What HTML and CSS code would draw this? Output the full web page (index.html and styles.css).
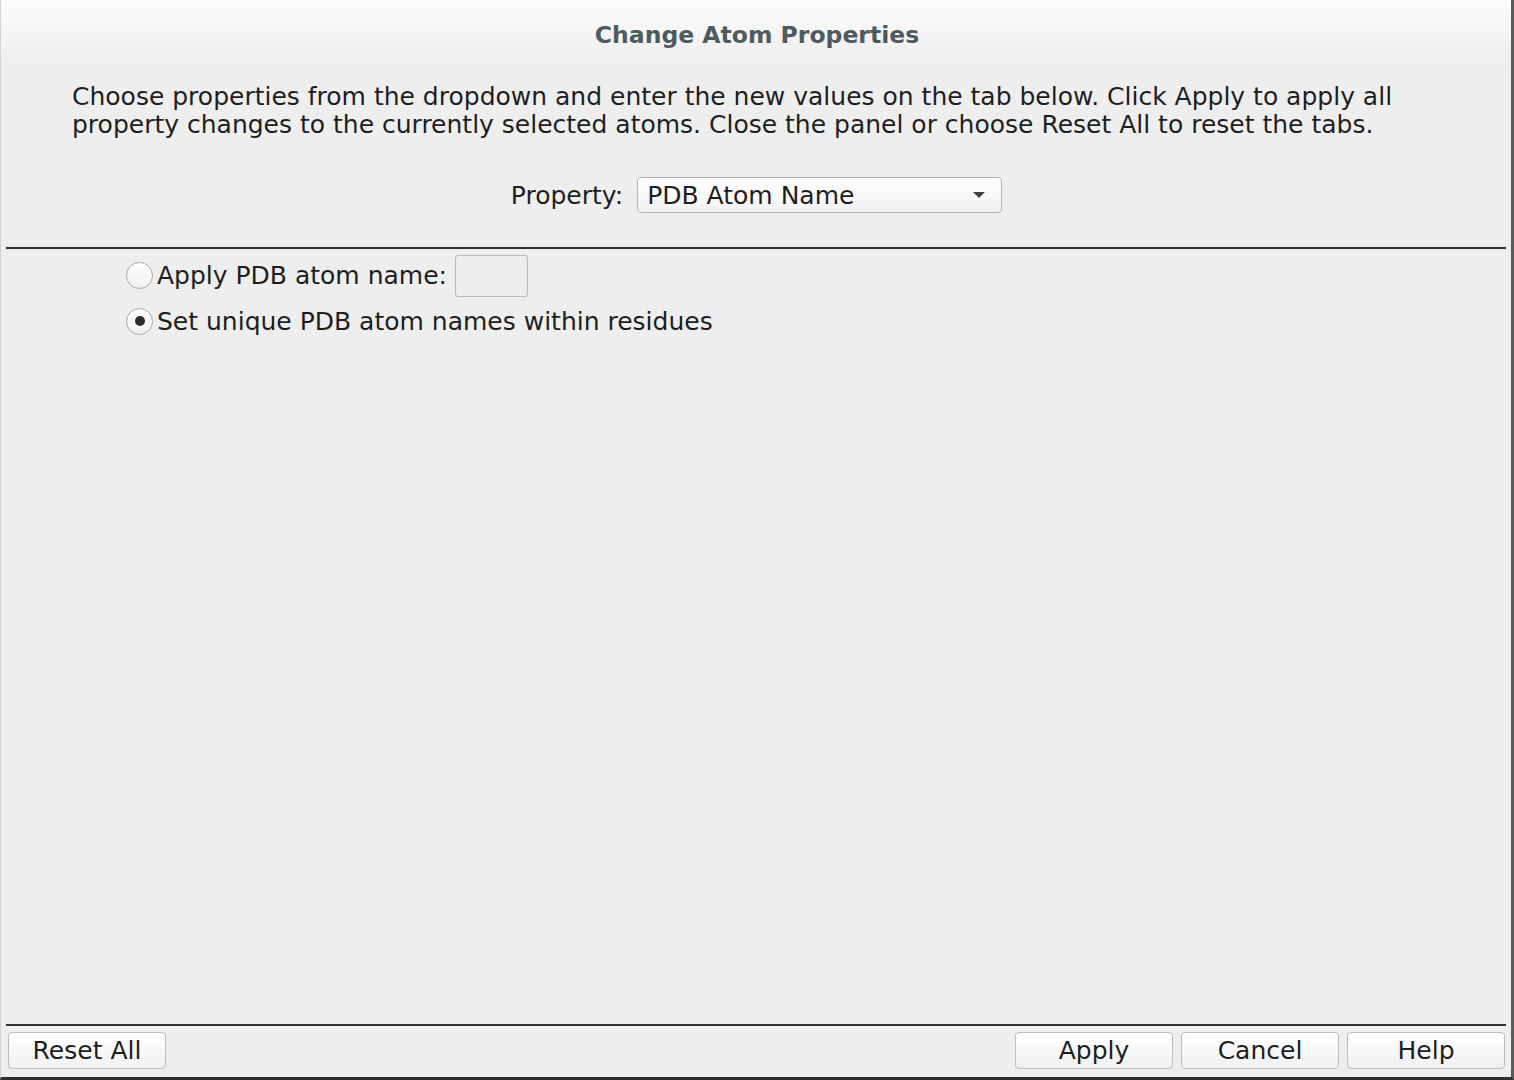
FILE: index.html
```html
<!DOCTYPE html>
<html>
<head>
<meta charset="utf-8">
<title>Change Atom Properties</title>
<link rel="stylesheet" href="styles.css">
</head>
<body>
<div class="window">
  <header class="titlebar">
    <h1 class="title">Change Atom Properties</h1>
  </header>
  <main class="content">
    <p class="intro">Choose properties from the dropdown and enter the new values on the tab below. Click Apply to apply all<br>property changes to the currently selected atoms. Close the panel or choose Reset All to reset the tabs.</p>
    <div class="property-row">
      <span class="label">Property:</span>
      <div class="combo">
        <span class="combo-text">PDB Atom Name</span>
        <svg class="combo-arrow" width="14" height="8" viewBox="0 0 14 8"><path d="M1 1 L13 1 L7 7 Z" fill="#404040"/></svg>
      </div>
    </div>
    <hr class="sep">
    <div class="options">
      <label class="option">
        <span class="radio"></span>
        <span class="option-text">Apply PDB atom name:</span>
        <span class="textfield"></span>
      </label>
      <label class="option">
        <span class="radio checked"></span>
        <span class="option-text">Set unique PDB atom names within residues</span>
      </label>
    </div>
    <div class="spacer"></div>
    <hr class="sep">
    <div class="buttons">
      <button class="btn">Reset All</button>
      <div class="btn-group">
        <button class="btn">Apply</button>
        <button class="btn">Cancel</button>
        <button class="btn">Help</button>
      </div>
    </div>
  </main>
</div>
</body>
</html>
```

FILE: styles.css
```css
html, body {
  margin: 0;
  padding: 0;
  background: #eeeeee;
}
body {
  font-family: "DejaVu Sans", sans-serif;
  color: #1e1e1e;
}
.window {
  width: 1514px;
  height: 1080px;
  box-sizing: border-box;
  border-left: 1px solid #d2d2d2;
  border-right: 3px solid #5a5a5a;
  border-bottom: 3px solid #2e2e2e;
  background: #eeeeee;
  display: flex;
  flex-direction: column;
}
.titlebar {
  height: 70px;
  flex: none;
  background: linear-gradient(#fdfdfd, #ececec);
  display: flex;
  align-items: center;
  justify-content: center;
}
.title {
  margin: 0;
  font-size: 23.5px;
  font-weight: bold;
  color: #4d5a5f;
  padding-left: 2px;
}
.content {
  flex: 1;
  display: flex;
  flex-direction: column;
  padding: 0 4px 0 5px;
}
.intro {
  margin: 13px 0 0 66px;
  font-size: 25px;
  line-height: 28px;
  color: #1e1e1e;
  white-space: nowrap;
}
.property-row {
  display: flex;
  align-items: center;
  justify-content: center;
  margin-top: 38px;
  gap: 14px;
}
.label {
  font-size: 25px;
}
.combo {
  width: 363px;
  height: 34px;
  box-sizing: content-box;
  border: 1px solid #b5b5b5;
  border-radius: 4px;
  background: linear-gradient(#ffffff, #f2f2f2);
  display: flex;
  align-items: center;
  justify-content: space-between;
  padding: 0;
}
.combo-text {
  font-size: 25px;
  margin-left: 9px;
}
.combo-arrow {
  margin-right: 15px;
}
.sep {
  margin: 0;
  border: none;
  height: 2px;
  background: #333333;
  margin-right: 1px;
  flex: none;
}
.property-row + .sep {
  margin-top: 34px;
}
.options {
  display: flex;
  flex-direction: column;
  padding-left: 120px;
  margin-top: 5px;
}
.option {
  display: flex;
  align-items: center;
  height: 43px;
  font-size: 25px;
}
.option + .option {
  height: 40px;
  margin-top: 4px;
}
.radio {
  width: 27px;
  height: 27px;
  box-sizing: border-box;
  border: 1px solid #a8a8a8;
  border-radius: 50%;
  background: linear-gradient(#ffffff, #f0f0f0);
  position: relative;
  flex: none;
  margin-right: 4px;
}
.radio.checked::after {
  content: "";
  position: absolute;
  left: 7.5px;
  top: 7.5px;
  width: 10px;
  height: 10px;
  border-radius: 50%;
  background: #2d2d2d;
}
.textfield {
  width: 71px;
  height: 40px;
  border: 1px solid #b8b8b8;
  border-radius: 3px;
  background: #ededed;
  margin-left: 8px;
}
.spacer {
  flex: 1;
}
.buttons {
  display: flex;
  justify-content: space-between;
  padding: 6px 2px 8px 2px;
}
.btn-group {
  display: flex;
  gap: 8px;
}
.btn {
  width: 158px;
  height: 37px;
  font-family: "DejaVu Sans", sans-serif;
  font-size: 25px;
  line-height: 1;
  color: #1e1e1e;
  border: 1px solid #bcbcbc;
  border-radius: 4px;
  background: linear-gradient(#ffffff, #f1f1f1);
  padding: 0;
}
```
